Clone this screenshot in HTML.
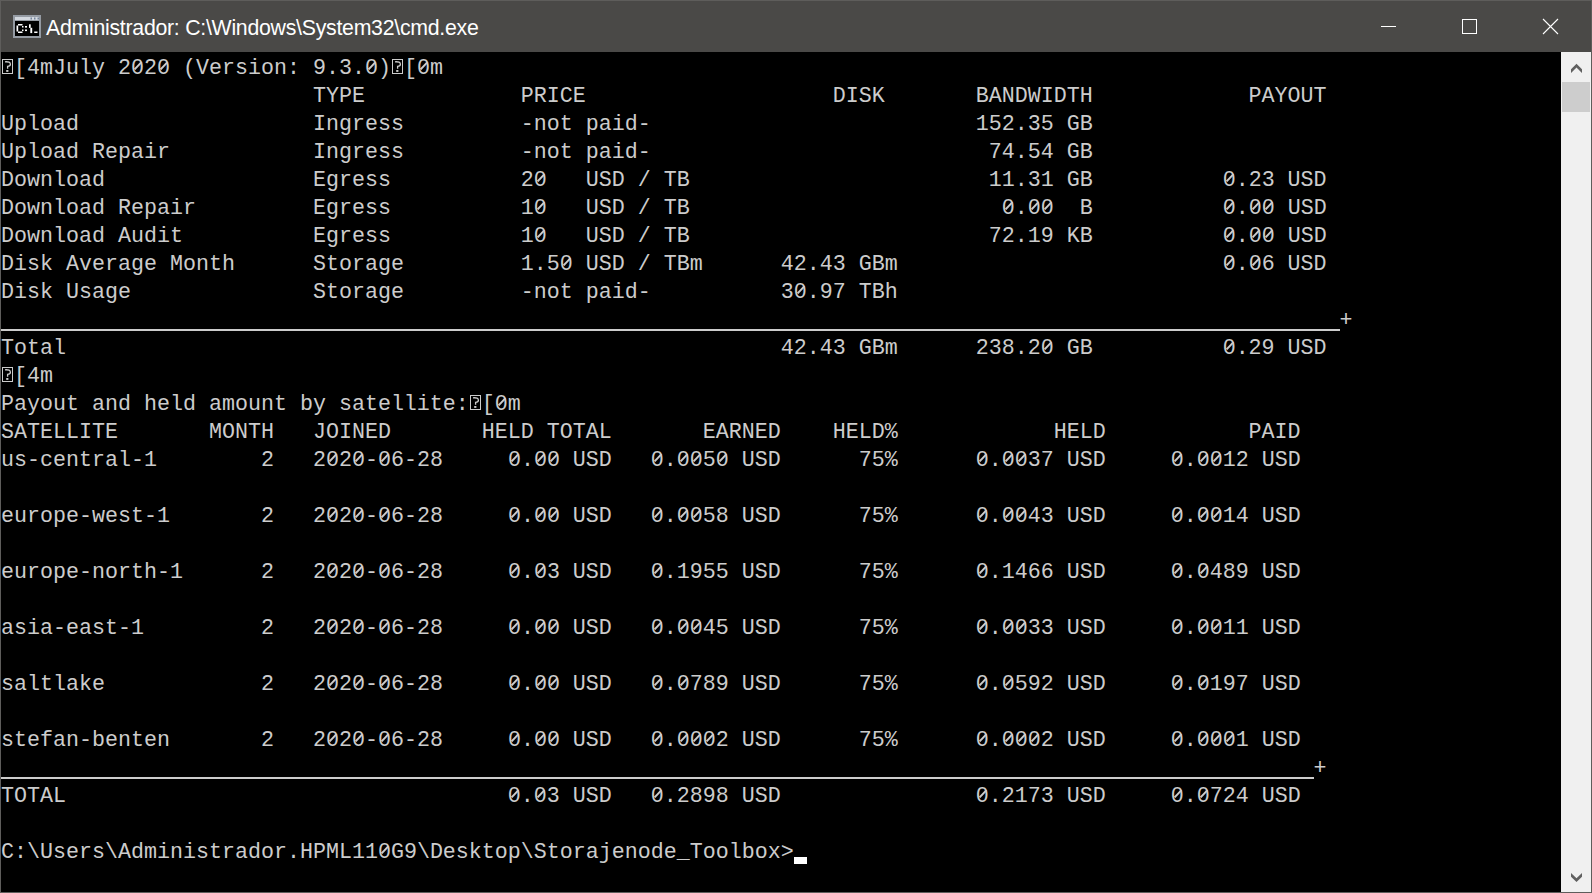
<!DOCTYPE html>
<html><head><meta charset="utf-8">
<style>
html,body{margin:0;padding:0;}
body{width:1592px;height:893px;overflow:hidden;background:#000;position:relative;}
#win{position:absolute;left:0;top:0;width:1592px;height:893px;background:#5e5d5b;}
#title{position:absolute;left:1px;top:1px;width:1590px;height:51px;background:#4a4947;}
#con{position:absolute;left:1px;top:52px;width:1560px;height:840px;background:#000;overflow:hidden;}
#sb{position:absolute;left:1561px;top:52px;width:30px;height:840px;background:#f0f0f0;}
#thumb{position:absolute;left:1px;top:30px;width:28px;height:30px;background:#cdcdcd;}
.r{position:absolute;left:0;height:28px;line-height:28px;white-space:pre;font-family:"Liberation Mono",monospace;font-size:21.667px;color:#cccccc;}
.bx{display:inline-block;width:13px;height:28px;vertical-align:top;position:relative;}
.bx svg{position:absolute;left:0;top:0;}
.ttl{position:absolute;left:45px;top:15px;font-family:"Liberation Sans",sans-serif;font-size:21.3px;letter-spacing:-0.27px;color:#fff;white-space:pre;}
.ln{position:absolute;left:0;height:2px;background:#cccccc;}
.z{display:inline-block;width:13px;height:28px;vertical-align:top;position:relative;font-weight:normal;}
.z:before{content:"";position:absolute;left:4.5px;top:9.5px;width:4px;height:4px;background:#000;}
.z:after{content:"";position:absolute;left:2px;top:9.8px;width:9.5px;height:1.7px;background:#ccc;transform:rotate(-47deg);transform-origin:50% 50%;}
#cur{position:absolute;left:793px;top:805px;width:13px;height:7px;background:#fff;}
svg{display:block;}
</style></head><body>
<div id="win">
<div id="title">
<svg style="position:absolute;left:0;top:0" width="1590" height="51" viewBox="1 1 1590 51">
  <!-- cmd icon -->
  <rect x="13" y="15" width="28" height="23" fill="#959ba3"/>
  <rect x="15" y="17" width="24" height="3" fill="#d3d8df"/>
  <rect x="30.5" y="17.5" width="1.5" height="2" fill="#74839a"/>
  <rect x="34" y="17.5" width="1.5" height="2" fill="#74839a"/>
  <rect x="37.5" y="17.5" width="1.5" height="2" fill="#74839a"/>
  <rect x="15" y="21" width="24" height="15" fill="#000"/>
  <rect x="18" y="24" width="4.5" height="1.5" fill="#fff"/>
  <rect x="18" y="31.5" width="4.5" height="1.5" fill="#fff"/>
  <rect x="16.5" y="25.5" width="1.7" height="6" fill="#fff"/>
  <rect x="22" y="26" width="1.5" height="1.5" fill="#fff"/>
  <rect x="22" y="29.5" width="1.5" height="1.5" fill="#fff"/>
  <rect x="25" y="26" width="2" height="1.6" fill="#fff"/>
  <rect x="25" y="29.5" width="2" height="1.6" fill="#fff"/>
  <rect x="29" y="24.3" width="1.7" height="3.6" fill="#fff"/>
  <rect x="30.3" y="27.8" width="1.9" height="5.3" fill="#fff"/>
  <rect x="34.2" y="31.5" width="3.3" height="1.5" fill="#fff"/>
  <!-- buttons -->
  <rect x="1381" y="26" width="15" height="1" fill="#fff"/>
  <rect x="1462.5" y="19.5" width="14" height="14" fill="none" stroke="#fff" stroke-width="1"/>
  <path d="M1543 19 L1558 34 M1558 19 L1543 34" stroke="#fff" stroke-width="1.1" fill="none"/>
</svg>
<div class="ttl">Administrador: C:\Windows\System32\cmd.exe</div>
</div>
<div id="con">
<div class="r" style="top:3px"><i class="bx"><svg width="13" height="28"><rect x="1.5" y="4.5" width="10" height="14" fill="none" stroke="#ccc" stroke-width="1"/><path d="M4 6.8 Q9.4 6.4 9.4 9.2 Q9.4 11.2 6.6 11.4 V13.8" stroke="#ccc" stroke-width="1.3" fill="none"/><rect x="5.2" y="15" width="2.2" height="1.9" fill="#ccc"/></svg></i>[4mJuly 2<b class="z">0</b>2<b class="z">0</b> (Version: 9.3.<b class="z">0</b>)<i class="bx"><svg width="13" height="28"><rect x="1.5" y="4.5" width="10" height="14" fill="none" stroke="#ccc" stroke-width="1"/><path d="M4 6.8 Q9.4 6.4 9.4 9.2 Q9.4 11.2 6.6 11.4 V13.8" stroke="#ccc" stroke-width="1.3" fill="none"/><rect x="5.2" y="15" width="2.2" height="1.9" fill="#ccc"/></svg></i>[<b class="z">0</b>m</div>
<div class="r" style="top:31px">                        TYPE            PRICE                   DISK       BANDWIDTH            PAYOUT</div>
<div class="r" style="top:59px">Upload                  Ingress         -not paid-                         152.35 GB</div>
<div class="r" style="top:87px">Upload Repair           Ingress         -not paid-                          74.54 GB</div>
<div class="r" style="top:115px">Download                Egress          2<b class="z">0</b>   USD / TB                       11.31 GB          <b class="z">0</b>.23 USD</div>
<div class="r" style="top:143px">Download Repair         Egress          1<b class="z">0</b>   USD / TB                        <b class="z">0</b>.<b class="z">0</b><b class="z">0</b>  B          <b class="z">0</b>.<b class="z">0</b><b class="z">0</b> USD</div>
<div class="r" style="top:171px">Download Audit          Egress          1<b class="z">0</b>   USD / TB                       72.19 KB          <b class="z">0</b>.<b class="z">0</b><b class="z">0</b> USD</div>
<div class="r" style="top:199px">Disk Average Month      Storage         1.5<b class="z">0</b> USD / TBm      42.43 GBm                         <b class="z">0</b>.<b class="z">0</b>6 USD</div>
<div class="r" style="top:227px">Disk Usage              Storage         -not paid-          3<b class="z">0</b>.97 TBh</div>
<div class="r" style="top:255px">                                                                                                       +</div>
<div class="r" style="top:283px">Total                                                       42.43 GBm      238.2<b class="z">0</b> GB          <b class="z">0</b>.29 USD</div>
<div class="r" style="top:311px"><i class="bx"><svg width="13" height="28"><rect x="1.5" y="4.5" width="10" height="14" fill="none" stroke="#ccc" stroke-width="1"/><path d="M4 6.8 Q9.4 6.4 9.4 9.2 Q9.4 11.2 6.6 11.4 V13.8" stroke="#ccc" stroke-width="1.3" fill="none"/><rect x="5.2" y="15" width="2.2" height="1.9" fill="#ccc"/></svg></i>[4m</div>
<div class="r" style="top:339px">Payout and held amount by satellite:<i class="bx"><svg width="13" height="28"><rect x="1.5" y="4.5" width="10" height="14" fill="none" stroke="#ccc" stroke-width="1"/><path d="M4 6.8 Q9.4 6.4 9.4 9.2 Q9.4 11.2 6.6 11.4 V13.8" stroke="#ccc" stroke-width="1.3" fill="none"/><rect x="5.2" y="15" width="2.2" height="1.9" fill="#ccc"/></svg></i>[<b class="z">0</b>m</div>
<div class="r" style="top:367px">SATELLITE       MONTH   JOINED       HELD TOTAL       EARNED    HELD%            HELD           PAID</div>
<div class="r" style="top:395px">us-central-1        2   2<b class="z">0</b>2<b class="z">0</b>-<b class="z">0</b>6-28     <b class="z">0</b>.<b class="z">0</b><b class="z">0</b> USD   <b class="z">0</b>.<b class="z">0</b><b class="z">0</b>5<b class="z">0</b> USD      75%      <b class="z">0</b>.<b class="z">0</b><b class="z">0</b>37 USD     <b class="z">0</b>.<b class="z">0</b><b class="z">0</b>12 USD</div>
<div class="r" style="top:451px">europe-west-1       2   2<b class="z">0</b>2<b class="z">0</b>-<b class="z">0</b>6-28     <b class="z">0</b>.<b class="z">0</b><b class="z">0</b> USD   <b class="z">0</b>.<b class="z">0</b><b class="z">0</b>58 USD      75%      <b class="z">0</b>.<b class="z">0</b><b class="z">0</b>43 USD     <b class="z">0</b>.<b class="z">0</b><b class="z">0</b>14 USD</div>
<div class="r" style="top:507px">europe-north-1      2   2<b class="z">0</b>2<b class="z">0</b>-<b class="z">0</b>6-28     <b class="z">0</b>.<b class="z">0</b>3 USD   <b class="z">0</b>.1955 USD      75%      <b class="z">0</b>.1466 USD     <b class="z">0</b>.<b class="z">0</b>489 USD</div>
<div class="r" style="top:563px">asia-east-1         2   2<b class="z">0</b>2<b class="z">0</b>-<b class="z">0</b>6-28     <b class="z">0</b>.<b class="z">0</b><b class="z">0</b> USD   <b class="z">0</b>.<b class="z">0</b><b class="z">0</b>45 USD      75%      <b class="z">0</b>.<b class="z">0</b><b class="z">0</b>33 USD     <b class="z">0</b>.<b class="z">0</b><b class="z">0</b>11 USD</div>
<div class="r" style="top:619px">saltlake            2   2<b class="z">0</b>2<b class="z">0</b>-<b class="z">0</b>6-28     <b class="z">0</b>.<b class="z">0</b><b class="z">0</b> USD   <b class="z">0</b>.<b class="z">0</b>789 USD      75%      <b class="z">0</b>.<b class="z">0</b>592 USD     <b class="z">0</b>.<b class="z">0</b>197 USD</div>
<div class="r" style="top:675px">stefan-benten       2   2<b class="z">0</b>2<b class="z">0</b>-<b class="z">0</b>6-28     <b class="z">0</b>.<b class="z">0</b><b class="z">0</b> USD   <b class="z">0</b>.<b class="z">0</b><b class="z">0</b><b class="z">0</b>2 USD      75%      <b class="z">0</b>.<b class="z">0</b><b class="z">0</b><b class="z">0</b>2 USD     <b class="z">0</b>.<b class="z">0</b><b class="z">0</b><b class="z">0</b>1 USD</div>
<div class="r" style="top:703px">                                                                                                     +</div>
<div class="r" style="top:731px">TOTAL                                  <b class="z">0</b>.<b class="z">0</b>3 USD   <b class="z">0</b>.2898 USD               <b class="z">0</b>.2173 USD     <b class="z">0</b>.<b class="z">0</b>724 USD</div>
<div class="r" style="top:787px">C:\Users\Administrador.HPML11<b class="z">0</b>G9\Desktop\Storajenode_Toolbox&gt;</div>
<div class="ln" style="top:277px;width:1339px"></div>
<div class="ln" style="top:725px;width:1313px"></div>
<div id="cur"></div>
</div>
<div id="sb">
<svg style="position:absolute;left:0;top:0" width="30" height="840" viewBox="1561 52 30 840">
  <path d="M1571 69.2 L1576.5 63.8 L1582 69.2 L1582 73 L1576.5 67.6 L1571 73 Z" fill="#606060"/>
  <path d="M1571 873 L1576.5 878.3 L1582 873 L1582 876.7 L1576.5 882 L1571 876.7 Z" fill="#606060"/>
</svg>
<div id="thumb"></div>
</div>
</div>
</body></html>
